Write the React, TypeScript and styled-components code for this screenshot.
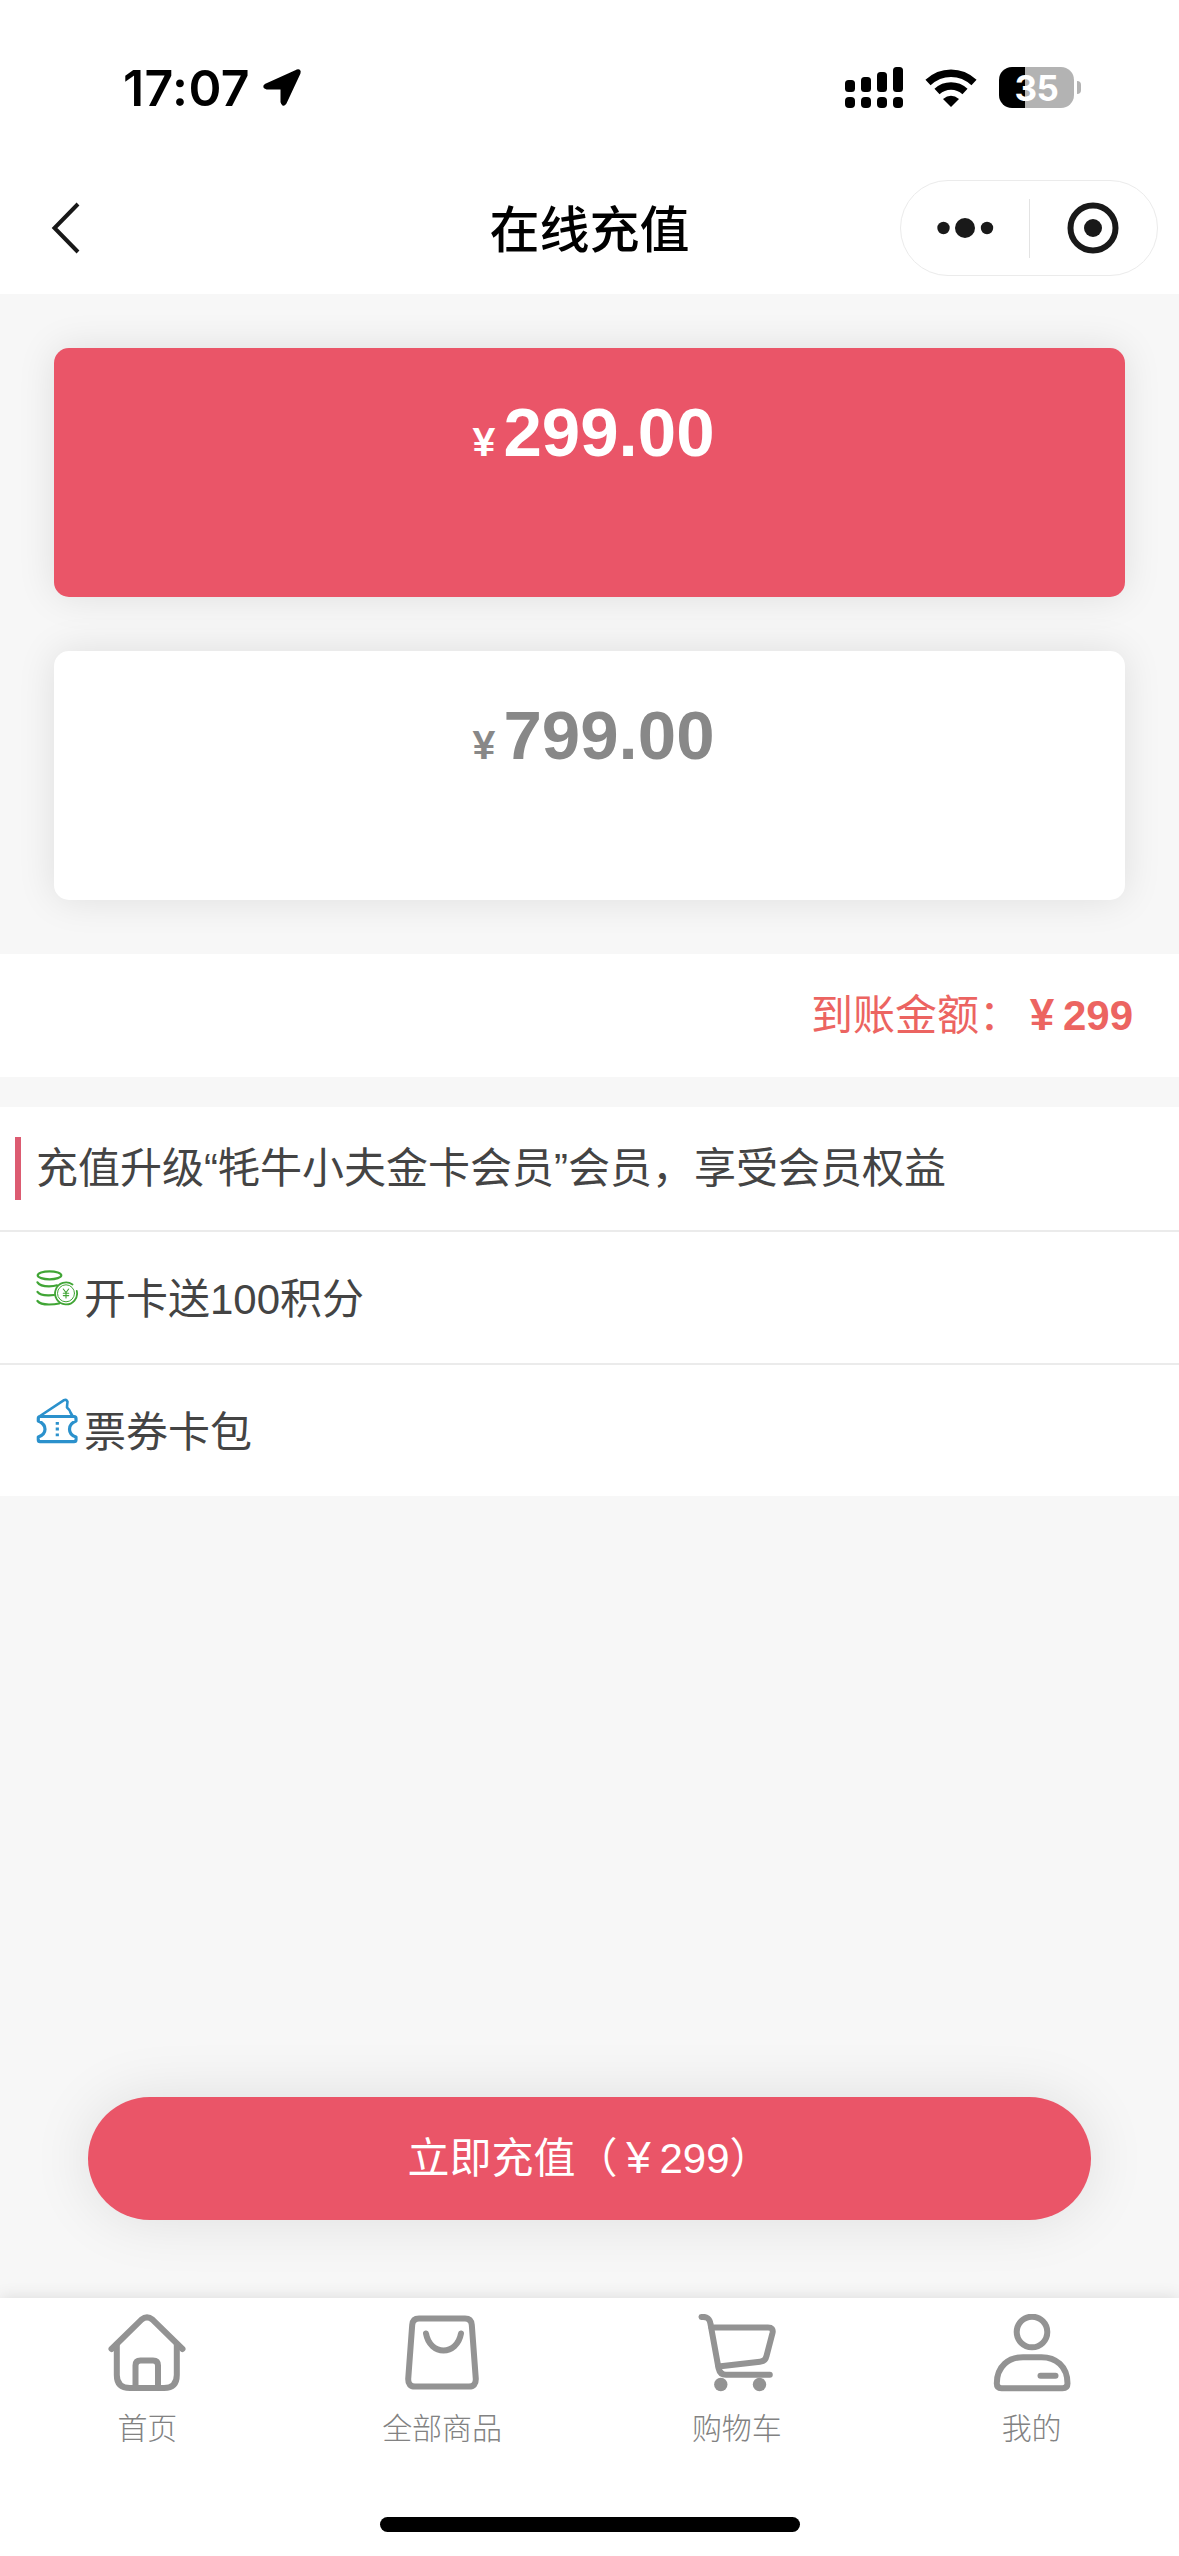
import React from "react";
import styled, { createGlobalStyle } from "styled-components";

const sans = `"Liberation Sans", "Noto Sans CJK SC", sans-serif`;
const accent = "#ea5568";

const GlobalStyle = createGlobalStyle`
  * { box-sizing: border-box; }
  body { margin: 0; background: #f7f7f7; font-family: ${sans}; }
`;

const Screen = styled.div`
  width: 1179px;
  height: 2556px;
  display: flex;
  flex-direction: column;
  background: #f7f7f7;
  overflow: hidden;
`;

const StatusBar = styled.div`
  flex: none;
  height: 175px;
  padding: 0 105px 0 123px;
  display: flex;
  justify-content: space-between;
  align-items: center;
  background: #fff;
`;

const StatusGroup = styled.div<{ $gap: number }>`
  display: flex;
  align-items: center;
  gap: ${(p) => p.$gap}px;
`;

const Clock = styled.span`
  font: 600 50px/60px Inter, sans-serif;
  letter-spacing: 0.4px;
  color: #000;
`;

const Battery = styled.div`
  position: relative;
  width: 75px;
  height: 41px;
  border-radius: 13px;
  background: linear-gradient(90deg, #000 26px, #b3b3b3 26px);
  color: #fff;
  font: 700 35px/42px Inter, sans-serif;
  letter-spacing: -0.5px;
  text-align: center;
`;

const BatteryNub = styled.i`
  position: absolute;
  left: 78px;
  top: 14px;
  width: 4px;
  height: 13px;
  border-radius: 0 5px 5px 0;
  background: #b3b3b3;
`;

const NavBar = styled.header`
  flex: none;
  height: 119px;
  padding: 5px 21px 0;
  display: grid;
  grid-template-columns: 1fr auto 1fr;
  align-items: start;
  background: #fff;
`;

const BackButton = styled.div`
  height: 96px;
  padding-left: 30px;
  display: flex;
  align-items: center;
`;

const Title = styled.h1`
  margin: 0;
  font: 500 50px/92px "Noto Sans CJK SC", sans-serif;
  color: #000;
`;

const Capsule = styled.div`
  justify-self: end;
  width: 258px;
  height: 96px;
  display: flex;
  align-items: center;
  border: 1px solid #ebebeb;
  border-radius: 48px;
`;

const CapsuleHalf = styled.div`
  flex: 1;
  display: flex;
  justify-content: center;
  align-items: center;
`;

const CapsuleRule = styled.div`
  width: 1px;
  height: 59px;
  background: #e3e3e3;
`;

const Plans = styled.section`
  flex: none;
  height: 660px;
  padding: 54px;
  display: flex;
  flex-direction: column;
  gap: 54px;
`;

const PlanCard = styled.div<{ $active?: boolean }>`
  height: 249px;
  padding-top: 46px;
  display: flex;
  justify-content: center;
  align-items: flex-start;
  border-radius: 15px;
  background: ${(p) => (p.$active ? accent : "#fff")};
  color: ${(p) => (p.$active ? "#fff" : "#888")};
  box-shadow: 0 0 38px rgba(0, 0, 0, 0.1);
  font-weight: 700;
  font-size: 69px;
  line-height: 78px;
`;

const Yen = styled.span<{ $size: number }>`
  display: inline-block;
  width: ${(p) => p.$size}px;
  font-size: ${(p) => p.$size + 2}px;
  text-align: center;
`;

const Credited = styled.section`
  flex: none;
  height: 123px;
  margin-bottom: 30px;
  padding-right: 46px;
  display: flex;
  justify-content: flex-end;
  align-items: center;
  background: #fff;
  color: #ec6461;
  font-size: 42px;
  line-height: 60px;
`;

const Benefits = styled.section`
  flex: none;
  height: 389px;
  display: flex;
  flex-direction: column;
  background: #fff;
  color: #444;
  font-size: 42px;
  line-height: 60px;
`;

const BenefitHead = styled.div`
  height: 123px;
  padding: 0 0 0 15px;
  display: flex;
  align-items: center;
  gap: 15px;
`;

const Marker = styled.i`
  width: 6px;
  height: 63px;
`;

const HeadMarker = styled(Marker)`
  background: #dc5b71;
`;

const BenefitRow = styled.div`
  height: 133px;
  padding: 5px 0 0 36px;
  display: flex;
  align-items: center;
  gap: 6px;
  border-top: 2px solid #ebebeb;
`;

const BenefitIcon = styled.span<{ $lift: number }>`
  display: flex;
  width: 42px;
  margin-bottom: ${(p) => p.$lift}px;
`;

const Spacer = styled.div`
  flex: 1;
`;

const PayButton = styled.button`
  flex: none;
  height: 123px;
  margin: 0 88px 78px;
  padding: 0;
  border: 0;
  border-radius: 62px;
  background: ${accent};
  box-shadow: 0 0 60px rgba(0, 0, 0, 0.1);
  color: #fff;
  font: 400 42px/120px ${sans};
`;

const TabBar = styled.nav`
  flex: none;
  height: 258px;
  display: flex;
  flex-direction: column;
  justify-content: space-between;
  align-items: center;
  background: #fff;
  box-shadow: 0 0 16px rgba(0, 0, 0, 0.12);
`;

const Tabs = styled.div`
  width: 100%;
  padding-top: 16px;
  display: grid;
  grid-template-columns: repeat(4, 1fr);
`;

const Tab = styled.div`
  display: flex;
  flex-direction: column;
  align-items: center;
  gap: 12px;
  color: #828282;
  font: 300 30px/44px "Noto Sans CJK SC", sans-serif;
`;

const HomeIndicator = styled.div`
  width: 420px;
  height: 15px;
  margin-bottom: 24px;
  border-radius: 8px;
  background: #000;
`;

const LocationIcon = () => (
  <svg width="40" height="40" viewBox="0 0 40 40">
    <path d="M4 17 35 3Q38 2 37 5L23 35Q21 38 20 34V20H5Q1 19 4 17Z" fill="#000" stroke="#000" strokeWidth="3" strokeLinejoin="round" />
  </svg>
);

const SignalIcon = () => (
  <svg width="58" height="41" viewBox="0 0 58 41">
    {[13, 10, 5, 0].map((top, i) => (
      <g key={top}>
        <rect x={i * 16} y={top} width="10" height={25 - top} rx="3.5" />
        <rect x={i * 16} y="30" width="10" height="11" rx="4" />
      </g>
    ))}
  </svg>
);

const WifiIcon = () => (
  <svg width="52" height="38" viewBox="0 0 52 38">
    <g fill="none" stroke="#000" strokeWidth="7.5">
      <path d="M3 13.5Q13 4.2 26 4.2T49 13.5" />
      <path d="M12 22.5Q18 17 26 17T40 22.5" />
    </g>
    <path d="M18 30Q26 23.500 34 30L26 38Z" />
  </svg>
);

const BackIcon = () => (
  <svg width="30" height="52" viewBox="0 0 30 52">
    <path d="M27 2 3.500 26 27 50" fill="none" stroke="#181818" strokeWidth="4" />
  </svg>
);

const MoreIcon = () => (
  <svg width="58" height="22" viewBox="0 0 58 22" fill="#191919">
    <circle cx="7.500" cy="11" r="6.200" />
    <circle cx="29" cy="11" r="10" />
    <circle cx="51" cy="11" r="6.200" />
  </svg>
);

const CloseIcon = () => (
  <svg width="52" height="52" viewBox="0 0 52 52">
    <circle cx="26" cy="26" r="22.500" fill="none" stroke="#191919" strokeWidth="6" />
    <circle cx="26" cy="26" r="9" fill="#191919" />
  </svg>
);

const CoinsIcon = () => (
  <svg width="42" height="36" viewBox="0 0 42 36" fill="none" stroke="#40a535" strokeWidth="2.200" strokeLinecap="round">
    <ellipse cx="13.500" cy="5.300" rx="11.800" ry="4" />
    <path d="M1.500 12.300Q4 16.300 13 16.300 18 16.300 21 15.300M1.500 21.800Q4 25.500 13 25.300L18 25M1.500 31Q4 34.500 13 34.500 19 34.500 23 33.500" />
    <path d="M36.500 14.500A11 11 0 1 0 40.800 21" strokeWidth="1.800" />
    <circle cx="30" cy="23.300" r="8.500" strokeWidth="1" />
    <path d="M27.300 19 30 22.600 32.700 19M30 22.600V28M27.300 23.300H32.700M27.300 25.600H32.700" strokeWidth="1.100" />
  </svg>
);

const TicketIcon = () => (
  <svg width="42" height="46" viewBox="0 0 42 46" fill="none" stroke="#2b91cc" strokeWidth="3.200" strokeLinejoin="round">
    <path d="M4 18 28 2.200Q30.500 1 31.500 3.800 31 7.500 31 9.500 34 12 34.500 14.500L36.500 18" strokeWidth="2.600" />
    <path d="M4 18.500H38Q40 18.500 40 20.500V23Q33.500 25.500 33.500 31.200T40 39V41.700Q40 43.700 38 43.700H4Q2.300 43.700 2.300 41.700V39Q9 36.500 9 31.200T2.300 23V20.500Q2.300 18.500 4 18.500Z" />
    <path d="M21.300 24V26.800M21.300 29.600V32.400M21.300 35.400V38.200" />
  </svg>
);

const TabSvg = styled.svg.attrs({ viewBox: "0 0 78 78" })`
  width: 78px;
  height: 78px;
  fill: none;
  stroke: #939393;
  stroke-width: 6px;
  stroke-linecap: round;
  stroke-linejoin: round;
`;

const Dot = styled.circle`
  fill: #939393;
  stroke: none;
`;

const HomeIcon = () => (
  <TabSvg>
    <path d="M3.500 35 33.500 5.600Q39 1 44.500 5.600L74.500 35" />
    <path d="M8.800 31V61Q8.800 74 22 74H56Q68.800 74 68.800 61V31" />
    <path d="M27.500 74V51.500Q27.500 46.500 32.500 46.500H45Q50 46.500 50 51.500V74" />
  </TabSvg>
);

const BagIcon = () => (
  <TabSvg>
    <path d="M16 4.500H62Q68.300 4.500 68.800 11L72.800 65Q73 72.500 66 72.500H12Q5 72.500 5.200 65L9.200 11Q9.700 4.500 16 4.500Z" />
    <path d="M23 19.500C27 42 54 42 58 19.500" />
  </TabSvg>
);

const CartIcon = () => (
  <TabSvg>
    <path d="M3.500 3Q11.500 2 12.500 10L20.500 54Q22 60.800 28 60.800H71.800" />
    <path d="M13.500 13.500H70Q75.800 13.500 74.500 19L68.500 42Q67.300 47.300 62 47.700L20.500 52.500" />
    <Dot cx="22.800" cy="70.500" r="6.700" />
    <Dot cx="61.500" cy="70.500" r="6.700" />
  </TabSvg>
);

const UserIcon = () => (
  <TabSvg>
    <circle cx="39" cy="18" r="15.300" />
    <path d="M8.500 74.200Q3.800 74.200 3.800 69.500C3.800 52 16 43.200 30 43.200H48.500C62.500 43.200 74.500 52 74.500 69.500Q74.500 74.200 69.500 74.200Z" />
    <path d="M47.500 61.800H62.500" />
  </TabSvg>
);

const tabs = [
  { label: "首页", icon: <HomeIcon /> },
  { label: "全部商品", icon: <BagIcon /> },
  { label: "购物车", icon: <CartIcon /> },
  { label: "我的", icon: <UserIcon /> },
];

export default function App() {
  return (
    <Screen>
      <GlobalStyle />
      <StatusBar>
        <StatusGroup $gap={12}>
          <Clock>17:07</Clock>
          <LocationIcon />
        </StatusGroup>
        <StatusGroup $gap={22}>
          <SignalIcon />
          <WifiIcon />
          <Battery>
            35
            <BatteryNub />
          </Battery>
        </StatusGroup>
      </StatusBar>
      <NavBar>
        <BackButton>
          <BackIcon />
        </BackButton>
        <Title>在线充值</Title>
        <Capsule>
          <CapsuleHalf>
            <MoreIcon />
          </CapsuleHalf>
          <CapsuleRule />
          <CapsuleHalf>
            <CloseIcon />
          </CapsuleHalf>
        </Capsule>
      </NavBar>
      <Plans>
        <PlanCard $active>
          <div>
            <Yen $size={39}>¥</Yen>299.00
          </div>
        </PlanCard>
        <PlanCard>
          <div>
            <Yen $size={39}>¥</Yen>799.00
          </div>
        </PlanCard>
      </Plans>
      <Credited>
        到账金额：
        <b>
          <Yen $size={42}>¥</Yen>299
        </b>
      </Credited>
      <Benefits>
        <BenefitHead>
          <HeadMarker />
          充值升级“牦牛小夫金卡会员”会员，享受会员权益
        </BenefitHead>
        <BenefitRow>
          <BenefitIcon $lift={24}>
            <CoinsIcon />
          </BenefitIcon>
          开卡送100积分
        </BenefitRow>
        <BenefitRow>
          <BenefitIcon $lift={24}>
            <TicketIcon />
          </BenefitIcon>
          票券卡包
        </BenefitRow>
      </Benefits>
      <Spacer />
      <PayButton>
        立即充值（<Yen $size={42}>¥</Yen>299）
      </PayButton>
      <TabBar>
        <Tabs>
          {tabs.map((t) => (
            <Tab key={t.label}>
              {t.icon}
              {t.label}
            </Tab>
          ))}
        </Tabs>
        <HomeIndicator />
      </TabBar>
    </Screen>
  );
}
